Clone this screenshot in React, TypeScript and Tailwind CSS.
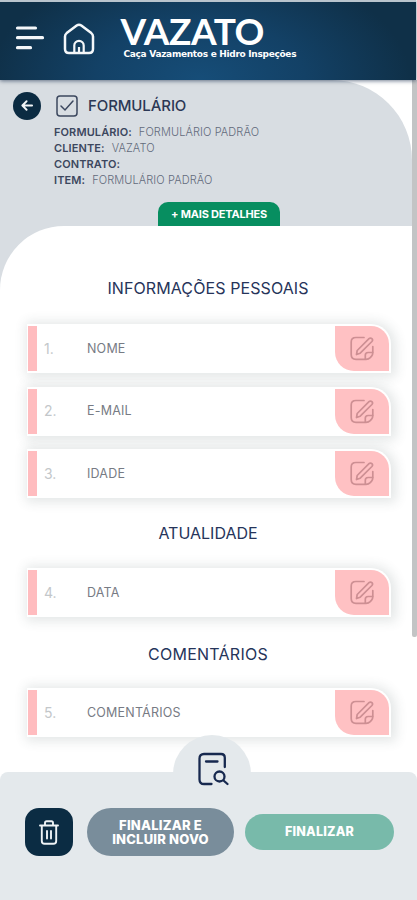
interface Question {
  number: number;
  label: string;
}

interface Section {
  title: string;
  titleClass: string;
  questions: Question[];
}

const details = [
  { label: "FORMULÁRIO:", value: "FORMULÁRIO PADRÃO" },
  { label: "CLIENTE:", value: "VAZATO" },
  { label: "CONTRATO:", value: "" },
  { label: "ITEM:", value: "FORMULÁRIO PADRÃO" },
];

const sections: Section[] = [
  {
    title: "INFORMAÇÕES PESSOAIS",
    titleClass: "h-[98px] pt-[50px] tracking-[0.1px]",
    questions: [
      { number: 1, label: "NOME" },
      { number: 2, label: "E-MAIL" },
      { number: 3, label: "IDADE" },
    ],
  },
  {
    title: "ATUALIDADE",
    titleClass: "h-[70px] pt-[23px]",
    questions: [{ number: 4, label: "DATA" }],
  },
  {
    title: "COMENTÁRIOS",
    titleClass: "h-[71px] pt-[25px] tracking-[0.25px]",
    questions: [{ number: 5, label: "COMENTÁRIOS" }],
  },
];

function MenuIcon() {
  return (
    <svg width="30" height="26" viewBox="0 0 30 26" fill="none" stroke="#f4f7fa" strokeWidth="3.2" strokeLinecap="round">
      <path d="M2.500 3h18M2.500 12.700h25M2.500 22.700h13" />
    </svg>
  );
}

function HomeIcon() {
  return (
    <svg width="32" height="32" viewBox="0 0 32 32" fill="none" stroke="#f4f7fa" strokeWidth="2.5" strokeLinejoin="round">
      <path d="M2 13.500c0-1.500.6-2.500 1.700-3.400L13.700 2.500c1.400-1 3.200-1 4.600 0l10 7.600c1.100.9 1.700 1.900 1.700 3.400V26c0 2.700-1.300 4-4 4H6c-2.700 0-4-1.300-4-4z" />
      <path d="M11.300 30v-7.500a4.700 4.700 0 0 1 9.400 0V30M16 24v6" strokeWidth="2.200" />
    </svg>
  );
}

function EditIcon() {
  return (
    <svg width="24" height="25" viewBox="0 0 24 25" fill="none" stroke="#cd8f93" strokeWidth="1.700" strokeLinecap="round" strokeLinejoin="round">
      <path d="M14 1.500H6C3 1.500 1.200 3.200 1.200 6v12.500c0 3 1.800 4.800 4.800 4.800h10c2 0 3-.4 4.200-1.600l1.400-1.500c.9-1 1.200-2 1.200-3.700V10.500" />
      <path d="M15.300 23v-3.700c0-1.800 1-2.800 2.800-2.800h4.500" />
      <path d="M6.500 18.500l.7-4L19 2.700c.9-.9 2-.9 2.900 0 .8.800.8 1.900 0 2.800L10.200 17.200z" />
    </svg>
  );
}

function ReviewIcon() {
  return (
    <svg width="32" height="34" viewBox="0 0 32 34" fill="none" stroke="#17294f" strokeWidth="2.300" strokeLinecap="round">
      <path d="M13.500 32H6c-2.900 0-4.500-1.600-4.500-4.500v-21C1.500 3.600 3.100 2 6 2h17c2.400 0 3.800 1.400 3.800 3.800V15" />
      <path d="M8 9.500h11.500" />
      <circle cx="21.500" cy="24.500" r="5" />
      <path d="M25.500 28.500l4 3.500" />
    </svg>
  );
}

function TrashIcon() {
  return (
    <svg width="20" height="25" viewBox="0 0 20 25" fill="none" stroke="#eef3f6" strokeWidth="1.900" strokeLinecap="round" strokeLinejoin="round">
      <path d="M1 5.500h18M6 5V2.800C6 1.800 6.600 1.200 7.600 1.200h4.800c1 0 1.600.6 1.600 1.600V5M2.800 6v15c0 1.900 1 2.800 2.800 2.800h8.800c1.800 0 2.800-.9 2.800-2.800V6M8 11v7.500M12 11v7.500" />
    </svg>
  );
}

function QuestionRow({ number, label }: Question) {
  return (
    <div className="flex h-[49px] items-center rounded-tr-[20px] bg-white py-[2px] pr-[2px] pl-px shadow-[2px_1px_12px_3px_rgba(60,75,80,0.14)]">
      <div className="h-[45px] w-[9px] bg-[#ffbcbf]" />
      <span className="w-[50px] pl-[7px] text-[14px] leading-none text-[#c3c7ca]">{number}.</span>
      <span className="flex-1 pt-px text-[12.5px] leading-none tracking-[0.2px] text-[#777b84]">{label}</span>
      <button className="flex h-[45px] w-[54px] items-center justify-center rounded-tr-[18px] rounded-bl-[19px] bg-[#ffc1c3]">
        <EditIcon />
      </button>
    </div>
  );
}

export default function App() {
  return (
    <div className="relative flex h-[900px] w-[417px] flex-col overflow-hidden bg-white font-['Inter',sans-serif] whitespace-nowrap">
      <header className="relative z-10 flex h-[80px] w-[416px] shrink-0 border-t-2 border-[#b9c4cd] bg-[radial-gradient(ellipse_210px_120px_at_200px_78px,#164d78_0%,#134166_50%,#0f3048_100%)] shadow-[0_1px_4px_rgba(20,40,70,0.6)]">
        <button className="mt-[23px] ml-[15px] h-[26px]">
          <MenuIcon />
        </button>
        <button className="mt-[21px] ml-[17.500px] h-[32px]">
          <HomeIcon />
        </button>
        <div className="mt-[12px] ml-[26px] w-[180px] text-white">
          <div className="h-[34px] font-['Lato'] text-[37px] leading-[34px] font-bold tracking-[-0.4px]">VAZATO</div>
          <div className="pl-[3px] font-['DejaVu_Sans'] text-[9px] leading-[12px] font-bold tracking-[-0.3px]">Caça Vazamentos e Hidro Inspeções</div>
        </div>
      </header>

      <main className="flex h-[820px] shrink-0">
        <div className="w-[412px]">
          <section className="flex h-[146px] flex-col rounded-tr-[80px] bg-[#d8dde2]">
            <div className="flex h-[43px] items-center pt-[8px] pl-[13px]">
              <button className="flex size-[28px] items-center justify-center rounded-full bg-[#0b2b42]">
                <svg width="12" height="11" viewBox="0 0 14 13" fill="none" stroke="#f2f5f7" strokeWidth="2.2" strokeLinecap="round" strokeLinejoin="round">
                  <path d="M13 6.500H2M6.500 1.500l-5 5 5 5" />
                </svg>
              </button>
              <svg className="ml-[15px]" width="22" height="22" viewBox="0 0 22 22" fill="none" stroke="#3b475e" strokeWidth="1.500" strokeLinecap="round">
                <rect x="1" y="1" width="20" height="20" rx="3" />
                <path d="M5 11l4 4 8-9" />
              </svg>
              <h1 className="ml-[10px] text-[15px] leading-none font-medium tracking-[-0.1px] text-[#2b3855]">FORMULÁRIO</h1>
            </div>
            <dl className="h-[79px] pt-px pl-[54px] text-[11px] leading-[16px] tracking-[0.1px]">
              {details.map((detail) => (
                <div key={detail.label} className="flex gap-[7px]">
                  <dt className="font-semibold text-[#3c475e]">{detail.label}</dt>
                  <dd className="font-light text-[#626a7b]">{detail.value}</dd>
                </div>
              ))}
            </dl>
            <button className="ml-[158px] h-[24px] w-[122px] rounded-t-[10px] bg-[#078e60] text-[11px] font-bold tracking-[-0.2px] text-white">+ MAIS DETALHES</button>
          </section>

          <div className="bg-[#d8dde2]">
            <div className="h-[674px] rounded-tl-[64px] bg-white">
              {sections.map((section) => (
                <section key={section.title}>
                  <h2 className={`${section.titleClass} pl-[4px] text-center text-[16px] leading-[24px] text-[#26345a]`}>{section.title}</h2>
                  <div className="flex flex-col gap-[13.500px] pr-[21px] pl-[27px]">
                    {section.questions.map((question) => (
                      <QuestionRow key={question.number} {...question} />
                    ))}
                  </div>
                </section>
              ))}
            </div>
          </div>
        </div>
        <div className="h-[557px] w-[5px] rounded-b-[2px] bg-[#c3c4c5]" />
      </main>

      <footer className="absolute bottom-0 left-0 h-[128px] w-full rounded-t-[8px] bg-[#e4e9ec]">
        <button className="absolute -top-[37px] left-[173px] flex h-[78px] w-[78px] items-center justify-center rounded-full bg-[#e4e9ec] pb-[11px] pl-[4px]">
          <ReviewIcon />
        </button>
        <div className="relative flex items-center pt-[36px] pl-[25px]">
          <button className="flex size-[48px] items-center justify-center rounded-[14px] bg-[#0b2c43]">
            <TrashIcon />
          </button>
          <button className="ml-[14px] h-[48px] w-[147px] rounded-full bg-[#798d9b] text-[13px] leading-[14px] font-extrabold tracking-[0.2px] text-white">
            FINALIZAR E
            <br />
            INCLUIR NOVO
          </button>
          <button className="ml-[11px] h-[36px] w-[149px] rounded-full bg-[#78baaa] text-[12.500px] leading-none font-extrabold tracking-[0.2px] text-white">FINALIZAR</button>
        </div>
      </footer>
    </div>
  );
}
